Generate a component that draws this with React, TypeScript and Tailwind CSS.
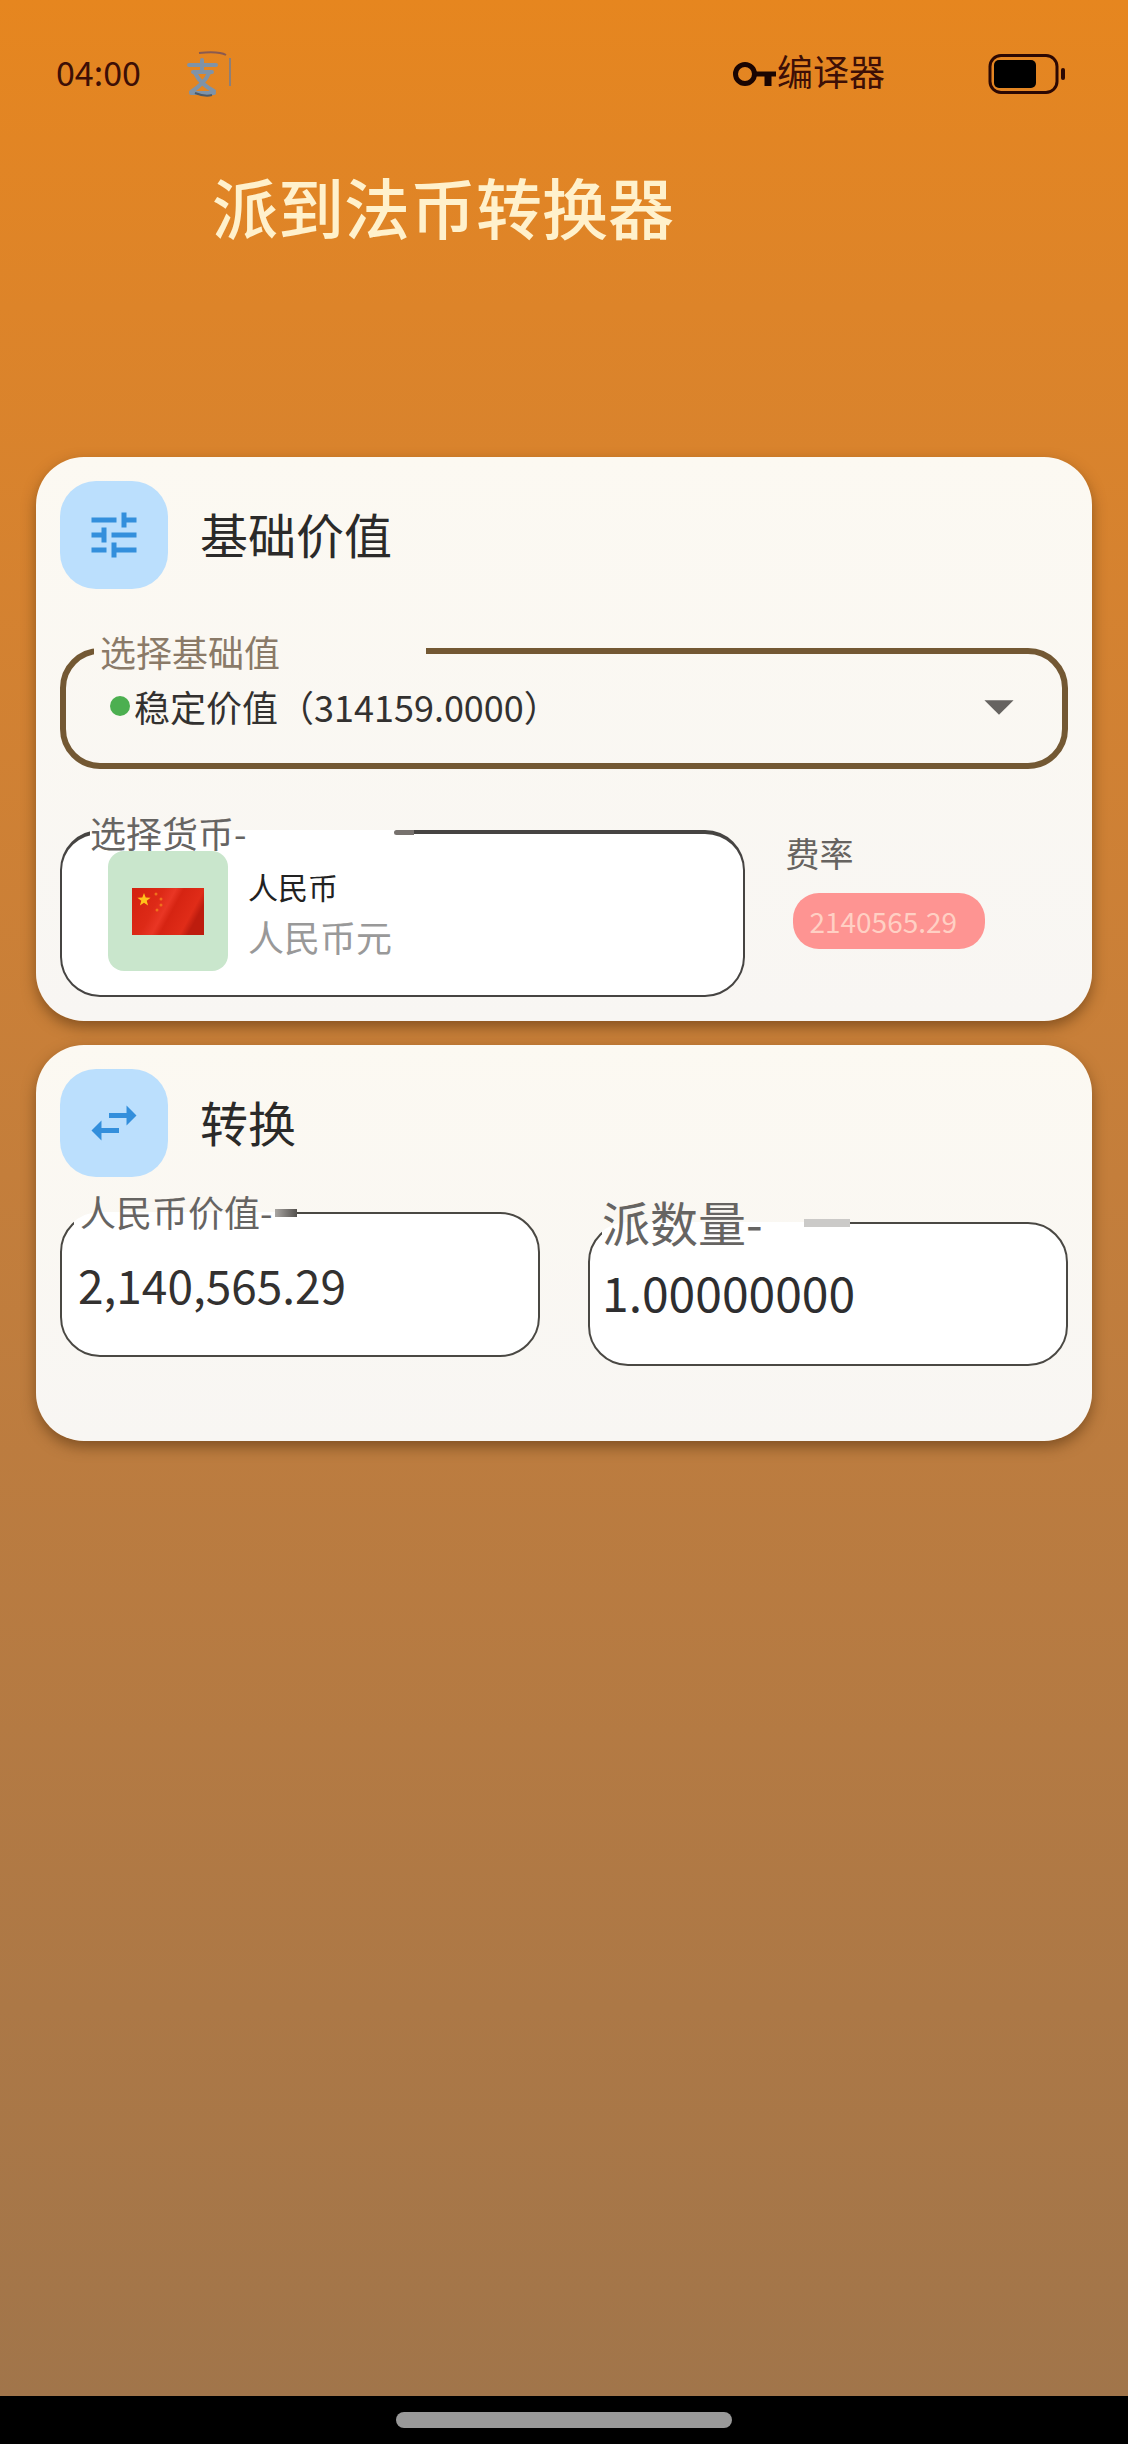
import { useState } from "react";
import { MdArrowDropDown, MdSwapHoriz, MdTune } from "react-icons/md";

function StatusBar() {
  return (
    <div className="flex items-center justify-between pl-14 pr-[62px] pt-11 leading-[52px] text-[#3d0f06]">
      <div className="flex items-center gap-11">
        <span className="pb-1 text-[34px]">04:00</span>
        <svg viewBox="0 0 48 48" className="size-12" fill="none" aria-hidden="true">
          <g stroke="#7f93a8" strokeWidth="4" strokeLinecap="round">
            <path d="M4 15h27M17 10v11M8 22h19M24 23c-3 8-9 13-18 19M10 23c4 8 9 13 19 18M6 43h23" />
          </g>
          <path d="M14 3q20-2 27 2" stroke="#8a5a50" strokeWidth="2" />
          <path d="M45 8v28" stroke="#8d7f78" strokeWidth="2" />
          <path d="M10 43q10 4 17 2" stroke="#4f5a66" strokeWidth="2" />
        </svg>
      </div>
      <div className="flex items-center">
        <svg viewBox="0 0 44 26" className="h-[26px] w-11" fill="none" stroke="#1a0502" aria-hidden="true">
          <circle cx="12" cy="13" r="9.5" strokeWidth="5" />
          <path d="M22 13h21" strokeWidth="5" />
          <path d="M35 13v12" strokeWidth="7" />
        </svg>
        <span className="pb-2 text-4xl leading-[52px]">编译器</span>
        <svg viewBox="0 0 78 40" className="ml-[103px] h-10 w-[78px]" fill="none" aria-hidden="true">
          <rect x="2" y="1.5" width="67" height="37" rx="11" stroke="#2c0803" strokeWidth="3" />
          <rect x="6" y="6" width="42" height="28" rx="5" fill="#000" />
          <rect x="73" y="14" width="4" height="12" rx="2" fill="#2c0803" />
        </svg>
      </div>
    </div>
  );
}

function ChinaFlag() {
  return (
    <svg viewBox="0 0 72 47" className="h-[47px] w-[72px]" aria-hidden="true">
      <defs>
        <linearGradient id="cloth" x1="0" y1="0" x2="1" y2="0.35">
          <stop offset="0" stopColor="#d3200f" />
          <stop offset="0.4" stopColor="#dd2a17" />
          <stop offset="0.55" stopColor="#e93624" />
          <stop offset="0.65" stopColor="#d62412" />
          <stop offset="0.9" stopColor="#e02c18" />
          <stop offset="1" stopColor="#bd1c0e" />
        </linearGradient>
      </defs>
      <rect width="72" height="47" fill="url(#cloth)" />
      <path d="M12 5l1.7 4.6 4.9.2-3.9 3 1.4 4.7-4.1-2.7-4.1 2.7 1.4-4.7-3.9-3 4.9-.2z" fill="#ffc21a" />
      <g fill="#f0701c">
        <circle cx="24" cy="6" r="1.5" />
        <circle cx="29" cy="11" r="1.5" />
        <circle cx="29" cy="17" r="1.5" />
        <circle cx="25" cy="22" r="1.5" />
      </g>
    </svg>
  );
}

function CardTitle({ icon, children }: { icon: React.ReactNode; children: string }) {
  return (
    <div className="flex items-center gap-8">
      <div className="flex size-[108px] items-center justify-center rounded-[36px] bg-[#bbdffd] text-6xl text-[#338fdc]">
        {icon}
      </div>
      <h2 className="pb-1 text-5xl leading-[60px] text-[#2b2a29]">{children}</h2>
    </div>
  );
}

const card =
  "rounded-[48px] bg-linear-to-b from-[#fcf9f2] to-[#f8f6f3] px-6 pt-6 shadow-[0_6px_14px_rgba(70,40,10,0.5)]";

export default function App() {
  const [base, setBase] = useState("stable");
  const [fiat, setFiat] = useState("2,140,565.29");
  const [pi, setPi] = useState("1.00000000");

  return (
    <div className="flex min-h-screen flex-col bg-black font-['Noto_Sans_CJK_SC',sans-serif]">
      <main className="flex-1 bg-linear-to-b from-[#e6861f] to-[#a1754a]">
        <StatusBar />
        <h1 className="mt-15 pl-[212px] text-[66px] leading-[82px] font-medium text-[#fff1cc]">派到法币转换器</h1>

        <div className="mt-[211px] flex flex-col gap-6 px-9">
          <section className={`${card} pb-6`}>
            <CardTitle icon={<MdTune />}>基础价值</CardTitle>

            <fieldset className="mt-11 min-w-0 rounded-[40px] border-[6px] border-[#735833] px-7 pb-5">
              <legend className="w-[332px] pl-[6px] text-4xl leading-9 text-[#8a7a68]">
                <label htmlFor="base">选择基础值</label>
              </legend>
              <div className="flex h-[74px] items-center gap-1 pl-4">
                <span className="size-5 shrink-0 rounded-full bg-[#4caf50]" />
                <select
                  id="base"
                  value={base}
                  onChange={(e) => setBase(e.target.value)}
                  className="h-full min-w-0 flex-1 appearance-none bg-transparent text-4xl text-[#333130] outline-none"
                >
                  <option value="stable">稳定价值（314159.0000）</option>
                </select>
                <MdArrowDropDown className="pointer-events-none size-[70px] text-[#666360]" />
              </div>
            </fieldset>

            <div className="mt-11 grid grid-cols-[17fr_8fr]">
              <fieldset className="min-w-0 rounded-[40px] border-2 border-t-4 border-[#464442] bg-white px-7 pb-6">
                <legend className="w-[324px] text-4xl leading-[38px] text-[#666462]">
                  <span className="flex items-center justify-between">
                    <label htmlFor="currency">选择货币-</label>
                    <span className="h-[5px] w-5 rounded-l-full bg-[#77726e]" />
                  </span>
                </legend>
                <button id="currency" type="button" className="flex w-full items-center gap-5 pl-[18px] text-left">
                  <span className="flex size-[120px] items-center justify-center rounded-2xl bg-[#c9e6cc]">
                    <ChinaFlag />
                  </span>
                  <span className="flex flex-col">
                    <span className="text-3xl leading-[50px] text-[#222]">人民币</span>
                    <span className="text-4xl leading-[50px] text-[#999]">人民币元</span>
                  </span>
                </button>
              </fieldset>
              <div className="pl-10 pt-[22px]">
                <p className="text-[34px] leading-9 text-[#666360]">费率</p>
                <p className="ml-2 mt-[22px] w-fit rounded-[26px] bg-[#fe9492] pl-4 pr-7 text-[28px] leading-14 text-[#ffd0c4]">
                  2140565.29
                </p>
              </div>
            </div>
          </section>

          <section className={`${card} pb-[75px]`}>
            <CardTitle icon={<MdSwapHoriz />}>转换</CardTitle>

            <div className="mt-4 grid grid-cols-2 items-start gap-12">
              <fieldset className="min-w-0 rounded-[40px] border-2 border-[#4a4843] bg-white px-3 pb-5">
                <legend className="w-[223px] pl-[6px] text-4xl leading-9 text-[#666462]">
                  <span className="flex items-center justify-between">
                    <label htmlFor="fiat" className="shrink-0 pb-1">人民币价值-</label>
                    <span className="h-2 w-[22px] shrink-0 bg-linear-to-r from-[#aaa7a4] to-[#55524f]" />
                  </span>
                </legend>
                <input
                  id="fiat"
                  value={fiat}
                  onChange={(e) => setFiat(e.target.value)}
                  className="h-[102px] w-full bg-transparent pl-1 text-[46px] text-[#333130] outline-none"
                />
              </fieldset>
              <fieldset className="mt-1 min-w-0 rounded-[40px] border-2 border-[#4a4843] bg-white px-3 pb-8">
                <legend className="w-[248px] text-5xl leading-12 text-[#666462]">
                  <span className="flex items-center justify-between">
                    <label htmlFor="pi" className="pb-1">派数量-</label>
                    <span className="h-2 w-[46px] bg-[#cbcac8]" />
                  </span>
                </legend>
                <input
                  id="pi"
                  value={pi}
                  onChange={(e) => setPi(e.target.value)}
                  className="h-[83px] w-full bg-transparent text-5xl text-[#2e2e30] outline-none"
                />
              </fieldset>
            </div>
          </section>
        </div>
      </main>

      <div className="flex h-12 items-center justify-center">
        <div className="h-4 w-[336px] rounded-full bg-[#999]" />
      </div>
    </div>
  );
}
